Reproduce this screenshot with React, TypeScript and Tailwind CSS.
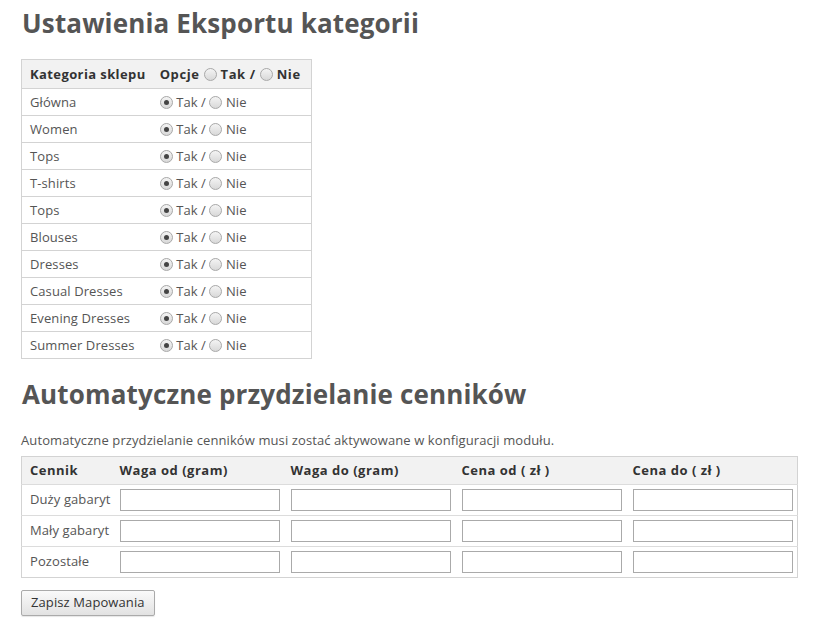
import React from "react";

const categories = [
  "Główna",
  "Women",
  "Tops",
  "T-shirts",
  "Tops",
  "Blouses",
  "Dresses",
  "Casual Dresses",
  "Evening Dresses",
  "Summer Dresses",
];

const priceRows = ["Duży gabaryt", "Mały gabaryt", "Pozostałe"];
const priceCols = ["Waga od (gram)", "Waga do (gram)", "Cena od ( zł )", "Cena do ( zł )"];

function Radio({ checked = false }: { checked?: boolean }) {
  return (
    <span className="relative inline-block w-[13px] h-[13px] rounded-full border border-[#a9a9a9] bg-gradient-to-b from-[#f4f4f4] to-[#d8d8d8] align-[-2px]">
      {checked && (
        <span className="absolute left-[3px] top-[3px] w-[5px] h-[5px] rounded-full bg-[#444]" />
      )}
    </span>
  );
}

export default function App() {
  return (
    <div className="font-['Open_Sans',sans-serif] text-[13px] tracking-[0.1px] text-[#555] bg-white min-h-[631px] pl-[21px] pt-[6px]">
      {/* Export settings */}
      <h1 className="text-[26px] leading-[34px] font-bold tracking-[0.15px] text-[#555] pl-px">
        Ustawienia Eksportu kategorii
      </h1>

      <table className="mt-[19px] border-collapse border border-[#d3d3d3]">
        <thead>
          <tr className="bg-[#f2f2f2]">
            <th className="text-left font-bold tracking-[0.4px] text-[#333] pl-2 pr-[6px] h-[29px] leading-[18px] whitespace-nowrap">
              Kategoria sklepu
            </th>
            <th className="text-left font-bold tracking-[0.6px] text-[#333] pl-2 pr-[10px] h-[29px] leading-[18px] whitespace-nowrap">
              Opcje <Radio /> Tak / <Radio /> Nie
            </th>
          </tr>
        </thead>
        <tbody>
          {categories.map((c, i) => (
            <tr key={i} className="border-t border-[#d3d3d3]">
              <td className="pl-2 pr-[6px] h-[27px] leading-[18px] whitespace-nowrap">{c}</td>
              <td className="px-2 h-[27px] leading-[18px] whitespace-nowrap">
                <Radio checked /> Tak / <Radio /> Nie
              </td>
            </tr>
          ))}
        </tbody>
      </table>

      {/* Price list mapping */}
      <h2 className="mt-[18px] text-[26px] leading-[34px] font-bold tracking-[0.15px] text-[#555] pl-px">
        Automatyczne przydzielanie cenników
      </h2>
      <p className="mt-[20px] leading-[18px]">
        Automatyczne przydzielanie cenników musi zostać aktywowane w konfiguracji modułu.
      </p>

      <table className="mt-[7px] border-collapse border border-[#d3d3d3] w-[777px]">
        <thead>
          <tr className="bg-[#f2f2f2]">
            <th className="w-[92px] text-left font-bold tracking-[0.5px] text-[#333] pl-2 h-[28px] leading-[19px]">
              Cennik
            </th>
            {priceCols.map((c) => (
              <th
                key={c}
                className="w-[171px] text-left font-bold tracking-[0.5px] text-[#333] pl-[6px] h-[28px] leading-[19px]"
              >
                {c}
              </th>
            ))}
          </tr>
        </thead>
        <tbody>
          {priceRows.map((r) => (
            <tr key={r} className="border-t border-[#dcdcdc]">
              <td className="pl-2 h-[30px] whitespace-nowrap">{r}</td>
              {priceCols.map((c) => (
                <td key={c} className="pl-[6px] py-[4px]">
                  <input
                    type="text"
                    className="block w-[160px] h-[22px] border border-[#aaa] bg-white outline-none"
                  />
                </td>
              ))}
            </tr>
          ))}
        </tbody>
      </table>

      <button className="mt-[12px] h-[26px] px-[9px] border border-[#aaa] rounded-[2px] bg-gradient-to-b from-[#fafafa] to-[#e2e2e2] text-[13px] text-[#333] shadow-[0_1px_1px_rgba(0,0,0,0.1)]">
        Zapisz Mapowania
      </button>
    </div>
  );
}
